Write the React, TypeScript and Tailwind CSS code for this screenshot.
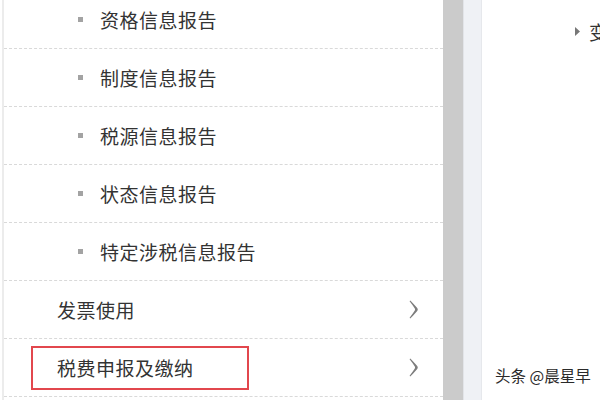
import React from "react";

const font = { fontFamily: '"Noto Sans CJK SC", "Microsoft YaHei", sans-serif' };

function Chevron() {
  return (
    <svg width="10" height="19" viewBox="0 0 10 19" className="shrink-0">
      <path
        d="M1.2 0.5 Q3.5 2.5 8.4 8.3 Q9.2 9.5 8.4 10.7 Q3.5 16.5 1.2 18.5 L0.6 17.8 Q3.6 14 5.8 10.6 Q6.4 9.5 5.8 8.4 Q3.6 5 0.6 1.2 Z"
        fill="#7d7d7d"
      />
    </svg>
  );
}

const subItems = ["资格信息报告", "制度信息报告", "税源信息报告", "状态信息报告", "特定涉税信息报告"];

export default function App() {
  return (
    <div className="w-[600px] h-[400px] overflow-hidden bg-white flex text-[#333]" style={font}>
      {/* left menu */}
      <div className="w-[443px] h-full pl-[2px] shrink-0">
        <div className="h-full border-l-2 border-[#ececec] flex flex-col">
          <div className="-mt-[9px] flex flex-col">
            {subItems.map((t) => (
              <div
                key={t}
                className="h-[58px] shrink-0 border-b border-dashed border-[#d9d9d9] flex items-center pl-[74px]"
              >
                <span className="w-[5px] h-[5px] bg-[#a3a3a3] mr-[17px] shrink-0" />
                <span className="text-[19px] tracking-[0.5px] leading-none">{t}</span>
              </div>
            ))}
            <div className="h-[58px] shrink-0 border-b border-dashed border-[#d9d9d9] flex items-center pl-[53px] pr-[24px]">
              <span className="text-[19px] tracking-[0.5px] leading-none flex-1">发票使用</span>
              <Chevron />
            </div>
            <div className="h-[58px] shrink-0 border-b border-dashed border-[#d9d9d9] flex items-center pl-[27px] pr-[24px]">
              <div className="flex-1 flex">
                <div className="w-[218px] h-[44px] border-2 border-[#e2474d] flex items-center pl-[24px]">
                  <span className="text-[19px] tracking-[0.5px] leading-none">税费申报及缴纳</span>
                </div>
              </div>
              <Chevron />
            </div>
            <div className="h-[58px] shrink-0" />
          </div>
        </div>
      </div>
      {/* scrollbar-like band */}
      <div className="w-[20px] h-full bg-[#cbcbcb] shrink-0" />
      <div className="w-[19px] h-full bg-[#eff1f5] border-l border-[#e2e4e8] border-r border-r-[#e6e8ec] shrink-0" />
      {/* right content */}
      <div className="relative flex-1 h-full bg-white">
        <div className="flex items-center pt-[22px] pl-[93px] whitespace-nowrap">
          <svg width="5" height="9" viewBox="0 0 5 9" className="mr-[9px]">
            <path d="M0 0 L5 4.5 L0 9 Z" fill="#777" />
          </svg>
          <span className="text-[19px] leading-none">变更登记</span>
        </div>
        <div
          className="absolute left-[13px] top-[368px] text-[15.5px] leading-none whitespace-nowrap text-[#2a2a2a]"
          style={{ textShadow: "0 0 2px #fff, 0 0 2px #fff" }}
        >
          头条 @晨星早
        </div>
      </div>
    </div>
  );
}
